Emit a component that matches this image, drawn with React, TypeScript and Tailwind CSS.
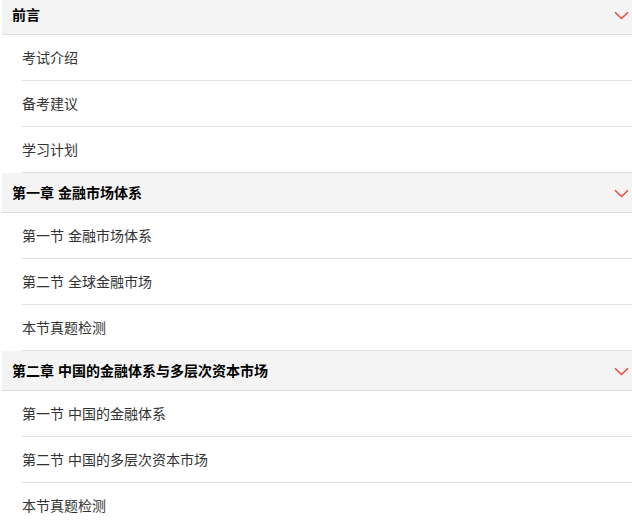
import React from 'react';

const chapters = [
  { title: '前言', items: ['考试介绍', '备考建议', '学习计划'] },
  { title: '第一章 金融市场体系', items: ['第一节 金融市场体系', '第二节 全球金融市场', '本节真题检测'] },
  {
    title: '第二章 中国的金融体系与多层次资本市场',
    items: ['第一节 中国的金融体系', '第二节 中国的多层次资本市场', '本节真题检测'],
  },
];

function Chevron() {
  return (
    <svg width="15" height="9" viewBox="0 0 15 9" fill="none" className="shrink-0 mt-[2px]">
      <path d="M1 1.2 L7.5 7.5 L14 1.2" stroke="#ee4b3c" strokeWidth="1.6" />
    </svg>
  );
}

export default function App() {
  return (
    <div
      className="w-[632px] h-[522px] overflow-hidden bg-white"
      style={{ fontFamily: '"Liberation Sans", "Noto Sans CJK SC", sans-serif' }}
    >
      <div className="mt-[-5px] pl-[2px]">
        {chapters.map((ch) => (
          <div key={ch.title}>
            <div className="h-[40px] flex items-center justify-between bg-[#f4f4f4] border-b border-[#dedede] pl-[10px] pr-[3px]">
              <span className="text-[14px] font-bold text-black pt-[1px]">{ch.title}</span>
              <Chevron />
            </div>
            {ch.items.map((it) => (
              <div
                key={it}
                className="ml-[20px] h-[46px] flex items-center border-b border-[#e2e2e2] text-[14px] text-[#333] pt-[2px]"
              >
                {it}
              </div>
            ))}
          </div>
        ))}
      </div>
    </div>
  );
}
